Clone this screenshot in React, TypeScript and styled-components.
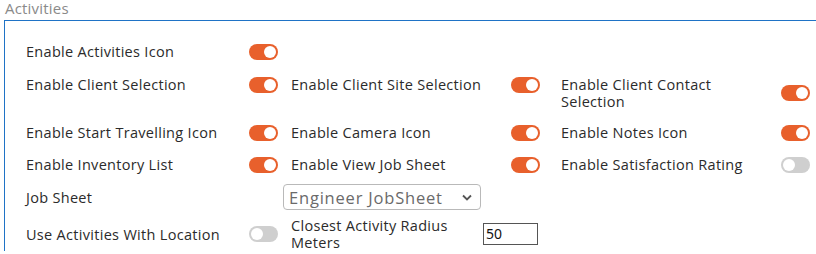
import React from "react";
import styled, { createGlobalStyle } from "styled-components";

const Global = createGlobalStyle`
  html, body { margin: 0; padding: 0; background: #fff; }
  body { font-family: "Open Sans", "Noto Sans", sans-serif; }
`;

const Page = styled.div`
  width: 816px;
  height: 254px;
  overflow: hidden;
`;

const Legend = styled.div`
  box-sizing: border-box;
  font-size: 15px;
  letter-spacing: 0.2px;
  line-height: 15px;
  color: #8a8a8a;
  padding: 1px 0 0 5px;
  height: 20px;
`;

const Box = styled.div`
  margin-left: 4px;
  border-top: 1px solid #1f73c6;
  border-left: 1px solid #1f73c6;
  padding: 14px 0 0 21px;
`;

const Row = styled.div<{ $pt: number; $pb: number; $align?: string }>`
  display: grid;
  grid-template-columns: 265px 270px 250px;
  align-items: ${(p) => p.$align || "start"};
  padding: ${(p) => p.$pt}px 0 ${(p) => p.$pb}px;
`;

const Group = styled.div<{ $labelW: number }>`
  display: grid;
  grid-template-columns: ${(p) => p.$labelW}px auto;
  align-items: center;
  justify-content: start;
`;

const Label = styled.span<{ $max?: number }>`
  font-size: 14.5px;
  letter-spacing: 0.3px;
  font-weight: 500;
  line-height: 17px;
  color: #2b2b2b;
  max-width: ${(p) => p.$max || 205}px;
`;

const Toggle = styled.span<{ $on: boolean }>`
  position: relative;
  display: block;
  width: 29px;
  height: 16px;
  border-radius: 8px;
  background: ${(p) => (p.$on ? "#e8602c" : "#cfcfcf")};
  &::after {
    content: "";
    position: absolute;
    top: 2px;
    left: ${(p) => (p.$on ? "15px" : "2px")};
    width: 12px;
    height: 12px;
    border-radius: 50%;
    background: #fff;
  }
`;

const SelectBox = styled.div`
  display: flex;
  align-items: center;
  justify-content: space-between;
  box-sizing: border-box;
  width: 198px;
  height: 26px;
  margin-left: -8px;
  padding: 0 8px 0 5px;
  border: 1px solid #b9b9b9;
  border-radius: 4px;
  font-size: 16.5px;
  letter-spacing: 0.8px;
  color: #6a6a6a;
  background: #fff;
`;

const NumInput = styled.div`
  box-sizing: border-box;
  width: 55px;
  height: 22px;
  margin-left: -28px;
  border: 1px solid #555;
  padding: 0 2px;
  font-family: "Noto Sans", sans-serif;
  font-size: 14px;
  line-height: 20px;
  color: #111;
`;

const Chevron = () => (
  <svg width="10" height="7" viewBox="0 0 10 7">
    <path d="M1 1.5 L5 5.5 L9 1.5" fill="none" stroke="#555" strokeWidth="1.8" />
  </svg>
);

type Item = { label: string; on: boolean };

const TogGroup = ({ item, w }: { item: Item; w: number }) => (
  <Group $labelW={w}>
    <Label>{item.label}</Label>
    <Toggle $on={item.on} />
  </Group>
);

export default function App() {
  return (
    <Page>
      <Global />
      <Legend>Activities</Legend>
      <Box>
        <Row $pt={8} $pb={8}>
          <TogGroup w={223} item={{ label: "Enable Activities Icon", on: true }} />
        </Row>
        <Row $pt={8} $pb={6}>
          <TogGroup w={223} item={{ label: "Enable Client Selection", on: true }} />
          <TogGroup w={220} item={{ label: "Enable Client Site Selection", on: true }} />
          <TogGroup w={220} item={{ label: "Enable Client Contact Selection", on: true }} />
        </Row>
        <Row $pt={8} $pb={8}>
          <TogGroup w={223} item={{ label: "Enable Start Travelling Icon", on: true }} />
          <TogGroup w={220} item={{ label: "Enable Camera Icon", on: true }} />
          <TogGroup w={220} item={{ label: "Enable Notes Icon", on: true }} />
        </Row>
        <Row $pt={7} $pb={8}>
          <TogGroup w={223} item={{ label: "Enable Inventory List", on: true }} />
          <TogGroup w={220} item={{ label: "Enable View Job Sheet", on: true }} />
          <TogGroup w={220} item={{ label: "Enable Satisfaction Rating", on: false }} />
        </Row>
        <Row $pt={3} $pb={3} $align="center">
          <Label>Job Sheet</Label>
          <SelectBox>
            <span>Engineer JobSheet</span>
            <Chevron />
          </SelectBox>
        </Row>
        <Row $pt={4} $pb={0} $align="center">
          <TogGroup w={223} item={{ label: "Use Activities With Location", on: false }} />
          <Group $labelW={220}>
            <Label $max={180}>Closest Activity Radius Meters</Label>
            <NumInput>50</NumInput>
          </Group>
        </Row>
      </Box>
    </Page>
  );
}
